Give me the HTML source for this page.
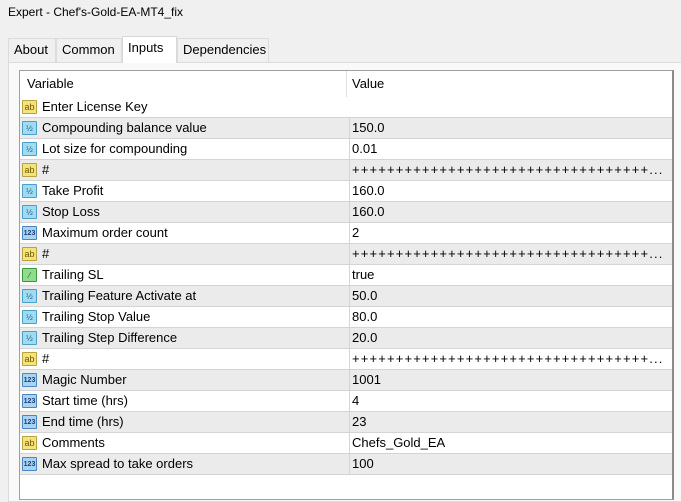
<!DOCTYPE html>
<html><head><meta charset="utf-8"><style>
*{margin:0;padding:0;box-sizing:border-box}
body{width:681px;height:495px;background:#f0f0f0;font-family:"Liberation Sans","Noto Sans CJK SC",sans-serif;font-size:13px;color:#000;position:relative;overflow:hidden}
.title{position:absolute;left:8px;top:5px;font-size:12px}
.tabs{position:absolute;left:8px;top:38px;height:25px}
.tab{position:absolute;top:0;height:24px;line-height:22px;padding:0 5px;background:#f0f0f0;border:1px solid #dcdcdc;border-bottom:none}
.tab.active{background:#fff;top:-2px;height:27px;border-color:#d8d8d8}
.panel{position:absolute;left:8px;top:62px;width:680px;height:440px;background:#f9f9f9;border:1px solid #dcdcdc}
.table{position:absolute;left:19px;top:70px;width:655px;height:430px;background:#fff;border:1px solid #a0a0a0;border-right:2px solid #8a8a8a}
.hdr{position:absolute;left:0;top:0;width:652px;height:26px;background:#fff}
.hdr span{position:absolute;top:5px}
.col{position:absolute;left:326px;top:0;width:1px;height:26px;background:#e0e0e0}
.row{position:absolute;left:0;width:652px;height:21px;border-bottom:1px solid #d4d4d4}
.row.g{background:#ebebeb}
.row .n{position:absolute;left:22px;top:2px}
.row .v{position:absolute;left:329px;border-left:1px solid #d4d4d4;padding-left:2px;height:20px;top:0;line-height:20px}
.row .v.p{letter-spacing:1.15px}
.ic{position:absolute;left:2px;top:3px;width:15px;height:14px;font-size:8px;line-height:13px;text-align:center;border:1px solid;border-radius:1px}
.ab{background:#f4e27a;border-color:#b8a340;color:#6a5a00;font-size:9px}
.d{background:#9fdcf2;border-color:#4aa0c8;color:#1b5f86}
.i{background:#a9d3f2;border-color:#4a86c0;color:#1a3f7a;font-size:7px;font-weight:bold}
.b{background:#8fdc8f;border-color:#3a9a3a;color:#1a5a1a}
</style></head><body>
<div class="title">Expert - Chef's-Gold-EA-MT4_fix</div>
<div class="panel"></div>
<div class="tabs">
<div class="tab" style="left:0;width:48px">About</div>
<div class="tab" style="left:48px;width:66px">Common</div>
<div class="tab active" style="left:114px;width:55px">Inputs</div>
<div class="tab" style="left:169px;width:92px">Dependencies</div>
</div>
<div class="table">
<div class="hdr"><span style="left:7px">Variable</span><div class="col"></div><span style="left:332px">Value</span></div>
<div class="row" style="top:26px"><div class="ic ab">ab</div><span class="n">Enter License Key</span></div>
<div class="row g" style="top:47px"><div class="ic d">½</div><span class="n">Compounding balance value</span><span class="v">150.0</span></div>
<div class="row" style="top:68px"><div class="ic d">½</div><span class="n">Lot size for compounding</span><span class="v">0.01</span></div>
<div class="row g" style="top:89px"><div class="ic ab">ab</div><span class="n">#</span><span class="v p">++++++++++++++++++++++++++++++++++...</span></div>
<div class="row" style="top:110px"><div class="ic d">½</div><span class="n">Take Profit</span><span class="v">160.0</span></div>
<div class="row g" style="top:131px"><div class="ic d">½</div><span class="n">Stop Loss</span><span class="v">160.0</span></div>
<div class="row" style="top:152px"><div class="ic i">123</div><span class="n">Maximum order count</span><span class="v">2</span></div>
<div class="row g" style="top:173px"><div class="ic ab">ab</div><span class="n">#</span><span class="v p">++++++++++++++++++++++++++++++++++...</span></div>
<div class="row" style="top:194px"><div class="ic b">⁄</div><span class="n">Trailing SL</span><span class="v">true</span></div>
<div class="row g" style="top:215px"><div class="ic d">½</div><span class="n">Trailing Feature Activate at</span><span class="v">50.0</span></div>
<div class="row" style="top:236px"><div class="ic d">½</div><span class="n">Trailing Stop Value</span><span class="v">80.0</span></div>
<div class="row g" style="top:257px"><div class="ic d">½</div><span class="n">Trailing Step Difference</span><span class="v">20.0</span></div>
<div class="row" style="top:278px"><div class="ic ab">ab</div><span class="n">#</span><span class="v p">++++++++++++++++++++++++++++++++++...</span></div>
<div class="row g" style="top:299px"><div class="ic i">123</div><span class="n">Magic Number</span><span class="v">1001</span></div>
<div class="row" style="top:320px"><div class="ic i">123</div><span class="n">Start time (hrs)</span><span class="v">4</span></div>
<div class="row g" style="top:341px"><div class="ic i">123</div><span class="n">End time (hrs)</span><span class="v">23</span></div>
<div class="row" style="top:362px"><div class="ic ab">ab</div><span class="n">Comments</span><span class="v">Chefs_Gold_EA</span></div>
<div class="row g" style="top:383px"><div class="ic i">123</div><span class="n">Max spread to take orders</span><span class="v">100</span></div>
</div>
</body></html>
